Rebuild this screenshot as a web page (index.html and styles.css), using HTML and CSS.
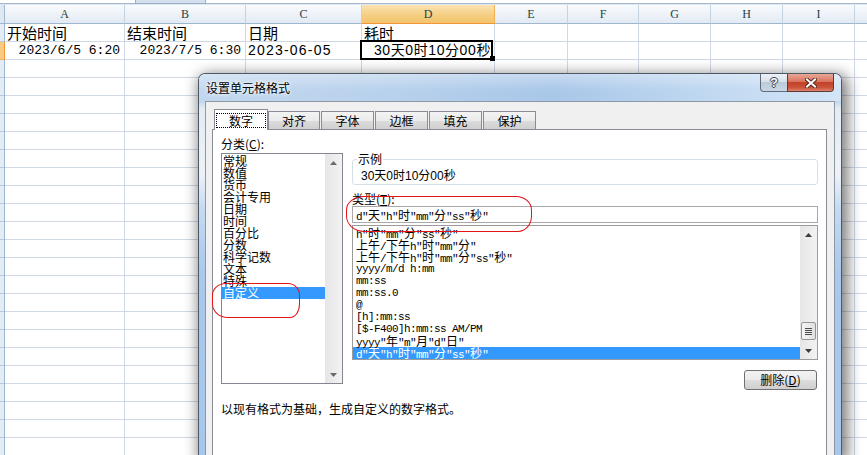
FILE: index.html
```html
<!DOCTYPE html>
<html lang="zh">
<head>
<meta charset="utf-8">
<title>设置单元格格式</title>
<link rel="stylesheet" href="styles.css">
</head>
<body>
<div class="topbar"><span class="topbar-tab"></span></div>
<div class="sheet">
  <div class="rh corner"></div>
  <div class="ch">A</div><div class="ch">B</div><div class="ch">C</div><div class="ch on">D</div><div class="ch">E</div><div class="ch">F</div><div class="ch">G</div><div class="ch">H</div><div class="ch">I</div><div class="ch last"></div>

  <div class="rh"></div>
  <div class="c">开始时间</div><div class="c">结束时间</div><div class="c">日期</div><div class="c">耗时</div><div class="c"></div><div class="c"></div><div class="c"></div><div class="c"></div><div class="c"></div><div class="c last"></div>

  <div class="rh on"></div>
  <div class="c num cmono">2023/6/5 6:20</div><div class="c num cmono">2023/7/5 6:30</div><div class="c sans">2023-06-05</div><div class="c num sans cur">30天0时10分00秒</div><div class="c"></div><div class="c"></div><div class="c"></div><div class="c"></div><div class="c"></div><div class="c last"></div>

  <div class="rh fill"></div>
  <div class="f"></div><div class="f"></div><div class="f"></div><div class="f"></div><div class="f"></div><div class="f"></div><div class="f"></div><div class="f"></div><div class="f"></div><div class="f last"></div>
</div>

<div class="dialog">
  <div class="titlebar">
    <span class="title">设置单元格格式</span>
    <div class="tbtns">
      <span class="btn-help">?</span>
      <span class="btn-close"><svg width="12" height="10" viewBox="0 0 12 10"><path d="M2 1.5 L10 8.5 M10 1.5 L2 8.5" stroke="#5a2a22" stroke-width="4" stroke-linecap="square"/><path d="M2 1.5 L10 8.5 M10 1.5 L2 8.5" stroke="#ffffff" stroke-width="2" stroke-linecap="square"/></svg></span>
    </div>
  </div>
  <div class="dbody">
    <div class="tabs">
      <span class="tab active"><span class="focus">数字</span></span>
      <span class="tab second">对齐</span>
      <span class="tab">字体</span>
      <span class="tab">边框</span>
      <span class="tab">填充</span>
      <span class="tab">保护</span>
    </div>
    <div class="panel">
      <div class="col-left">
        <div class="lbl">分类(<u>C</u>):</div>
        <div class="catlist">
          <ul class="items">
            <li>常规</li>
            <li>数值</li>
            <li>货币</li>
            <li>会计专用</li>
            <li>日期</li>
            <li>时间</li>
            <li>百分比</li>
            <li>分数</li>
            <li>科学记数</li>
            <li>文本</li>
            <li>特殊</li>
            <li class="sel">自定义</li>
          </ul>
          <div class="vscroll">
            <span class="sbtn"><svg width="7" height="4" viewBox="0 0 7 4"><path d="M3.5 0 L7 4 H0 Z" fill="#6a6a6a"/></svg></span>
            <span class="sspace"></span>
            <span class="sbtn"><svg width="7" height="4" viewBox="0 0 7 4"><path d="M0 0 H7 L3.5 4 Z" fill="#6a6a6a"/></svg></span>
          </div>
        </div>
      </div>
      <div class="col-right">
        <fieldset class="sample">
          <legend>示例</legend>
          <div class="sample-val">30天0时10分00秒</div>
        </fieldset>
        <div class="lbl lbl-type">类型(<u>T</u>):</div>
        <div class="typeinput fmt">d"<span class="zh">天</span>"h"<span class="zh">时</span>"mm"<span class="zh">分</span>"ss"<span class="zh">秒</span>"</div>
        <div class="typelist">
          <ul class="items fmt">
            <li>h"<span class="zh">时</span>"mm"<span class="zh">分</span>"ss"<span class="zh">秒</span>"</li>
            <li><span class="zh">上午</span>/<span class="zh">下午</span>h"<span class="zh">时</span>"mm"<span class="zh">分</span>"</li>
            <li><span class="zh">上午</span>/<span class="zh">下午</span>h"<span class="zh">时</span>"mm"<span class="zh">分</span>"ss"<span class="zh">秒</span>"</li>
            <li>yyyy/m/d h:mm</li>
            <li>mm:ss</li>
            <li>mm:ss.0</li>
            <li>@</li>
            <li>[h]:mm:ss</li>
            <li>[$-F400]h:mm:ss AM/PM</li>
            <li>yyyy"<span class="zh">年</span>"m"<span class="zh">月</span>"d"<span class="zh">日</span>"</li>
            <li class="sel">d"<span class="zh">天</span>"h"<span class="zh">时</span>"mm"<span class="zh">分</span>"ss"<span class="zh">秒</span>"</li>
          </ul>
          <div class="vscroll">
            <span class="sbtn"><svg width="7" height="4" viewBox="0 0 7 4"><path d="M3.5 0 L7 4 H0 Z" fill="#3c3c3c"/></svg></span>
            <span class="sspace"></span>
            <span class="thumb"><span class="grip"></span></span>
            <span class="sbtn"><svg width="7" height="4" viewBox="0 0 7 4"><path d="M0 0 H7 L3.5 4 Z" fill="#3c3c3c"/></svg></span>
          </div>
        </div>
        <span class="button">删除(<u>D</u>)</span>
      </div>
      <div class="desc">以现有格式为基础，生成自定义的数字格式。</div>
    </div>
  </div>
</div>

<div class="mark mark1"></div>
<div class="mark mark2"></div>
</body>
</html>
```
FILE: styles.css
```css
* { box-sizing: border-box; }
html, body { margin: 0; padding: 0; }
body {
  width: 867px;
  height: 455px;
  overflow: hidden;
  position: relative;
  background: #fff;
  font-family: "Noto Sans CJK SC", sans-serif;
  color: #000;
}

/* ---------- spreadsheet ---------- */
.topbar {
  height: 5px;
  display: flex;
  background: linear-gradient(to bottom, #fff 0, #fff 3px, #a4b7cd 3px, #a4b7cd 4px, #dfe7f1 4px);
}
.topbar-tab {
  margin-left: 135px;
  width: 71px;
  height: 4px;
  background: #d4e0ee;
  border: 1px solid #9ab0ca;
  border-top: 0;
}
.sheet {
  display: grid;
  grid-template-columns: 5px 120px 121px 116px 133px 73px 71px 72px 72px 72px 1fr;
  grid-template-rows: 19px 18px 18px 1fr;
  height: 450px;
}
.ch {
  background: linear-gradient(#f9fbfd, #e3eaf4);
  border-right: 1px solid #c5d2e2;
  border-bottom: 1px solid #9eb6ce;
  font: 12px/18px "Liberation Serif", serif;
  color: #27413e;
  text-align: center;
}
.ch.on {
  background: linear-gradient(#fae3b4, #f5cd80 60%, #f3c46c);
  border-right-color: #f1b256;
  border-bottom-color: #f29536;
}
.rh {
  background: #e4ecf7;
  border-right: 1px solid #9eb6ce;
  border-bottom: 1px solid #b9c9dc;
}
.rh.corner { background: #dfe7f2; border-bottom-color: #9eb6ce; }
.rh.on { background: #f8cb84; border-right-color: #f29536; border-bottom-color: #f0b260; }
.rh.fill {
  border-bottom: 0;
  background: repeating-linear-gradient(to bottom, #e4ecf7 0, #e4ecf7 17px, #b9c9dc 17px, #b9c9dc 18px);
}
.c {
  border-right: 1px solid #d0d7e5;
  border-bottom: 1px solid #d0d7e5;
  font-size: 15px;
  line-height: 17px;
  padding: 0 2px;
  white-space: nowrap;
}
.c.num { text-align: right; padding-right: 4px; }
.c.cmono { font-family: "Liberation Mono", monospace; font-size: 13px; }
.c.sans {
  font-family: "Liberation Sans", "Noto Sans CJK SC", sans-serif;
  font-size: 14px;
  letter-spacing: 1.2px;
}
.c.cur { position: relative; padding-right: 3px; letter-spacing: 0.6px; }
.c.cur::after {
  content: "";
  position: absolute;
  left: -2px; top: -2px; right: 1px; bottom: -1px;
  border: 2px solid #000;
}
.c.cur::before {
  content: "";
  position: absolute;
  right: -1px; bottom: -2px;
  width: 5px; height: 5px;
  background: #000;
  z-index: 1;
}
.f {
  border-right: 1px solid #d0d7e5;
  background: repeating-linear-gradient(to bottom, transparent 0, transparent 17px, #d0d7e5 17px, #d0d7e5 18px);
}
.last { border-right: 0; }

/* ---------- dialog ---------- */
.dialog {
  position: absolute;
  left: 198px;
  top: 73px;
  width: 644px;
  height: 382px;
  border: 1px solid #4d5966;
  border-bottom: 0;
  border-radius: 7px 7px 0 0;
  background: linear-gradient(to bottom, #c4d9ef 0, #bdd5ee 27px, #e4ebf3 34px, #eef2f7 100px, #c4daf1 135px, #a9c8ec 200px, #a6c6eb 382px);
  box-shadow: 3px 4px 14px 3px rgba(0, 0, 0, .5);
  display: flex;
  flex-direction: column;
  font-size: 12px;
}
.titlebar {
  height: 27px;
  display: flex;
  align-items: flex-start;
  border-radius: 6px 6px 0 0;
  background:
    linear-gradient(to bottom, rgba(255,255,255,.35), rgba(255,255,255,0) 60%),
    linear-gradient(to right, #c3d8ef 0%, #b8d1ec 30%, #a9c7e9 55%, #bcd5ef 75%, #d3e5f7 100%);
}
.title {
  padding-left: 7px;
  line-height: 27px;
  font-size: 12px;
  text-shadow: 0 0 5px #fff, 0 0 3px #fff;
}
.tbtns { margin-left: auto; margin-right: 7px; display: flex; }
.btn-help {
  width: 27px;
  height: 18px;
  border: 1px solid #5f6d7c;
  border-top: 0;
  border-right: 0;
  border-radius: 0 0 0 4px;
  background: linear-gradient(#eef2f7, #d7e0ea 45%, #bccbdb 50%, #c9d6e4);
  font: bold 13px/17px "Liberation Sans", sans-serif;
  color: #f5f7fa;
  text-align: center;
  text-shadow: 1px 0 #3a4656, -1px 0 #3a4656, 0 1px #3a4656, 0 -1px #3a4656;
}
.btn-close {
  width: 47px;
  height: 18px;
  border: 1px solid #5e3a33;
  border-top: 0;
  border-radius: 0 0 4px 0;
  background: linear-gradient(#e9a897, #d9735e 45%, #c2422a 50%, #cc533c 80%, #de846e);
  display: flex;
  align-items: center;
  justify-content: center;
}
.dbody {
  flex: 1;
  min-height: 0;
  margin: 0 6px;
  border: 1px solid #8d98a4;
  border-bottom: 0;
  background: #f0f0f0;
  display: flex;
  flex-direction: column;
  padding: 7px 7px 0 6px;
}
.tabs {
  display: flex;
  align-items: flex-end;
  height: 20px;
  flex: none;
  margin-left: 2px;
  position: relative;
  z-index: 1;
}
.tab {
  width: 53px;
  height: 18px;
  margin-left: 1px;
  border: 1px solid #898c95;
  border-bottom: 0;
  background: linear-gradient(#f3f3f3, #ebebeb 50%, #dddddd 50%, #cfcfcf);
  line-height: 17px;
  text-align: center;
}
.tab.second { width: 52px; margin-left: 0; }
.tab.active {
  width: 54px;
  height: 21px;
  margin-left: 0;
  margin-bottom: -1px;
  background: #fff;
  padding: 3px 1px 0 1px;
}
.focus {
  display: block;
  height: 15px;
  border: 1px dotted #000;
  line-height: 13px;
}
.panel {
  flex: 1;
  min-height: 0;
  overflow: hidden;
  background: #fff;
  border: 1px solid #898c95;
  border-bottom: 0;
  display: grid;
  grid-template-columns: 122px 466px;
  column-gap: 9px;
  align-content: start;
  padding: 6px 0 0 8px;
}
.lbl { line-height: 12px; margin-top: 2px; white-space: nowrap; }
.col-left { display: flex; flex-direction: column; }
.col-right { display: flex; flex-direction: column; }

.catlist {
  margin-top: 3px;
  height: 231px;
  border: 1px solid #828790;
  display: flex;
}
.items {
  list-style: none;
  margin: 0;
  padding: 1px 0 0 0;
  flex: 1;
  overflow: hidden;
}
.items li {
  display: block;
  height: 12px;
  line-height: 12px;
  white-space: nowrap;
  padding-left: 1px;
}
.items li.sel { background: #3399ff; color: #fff; }
.vscroll {
  width: 17px;
  display: flex;
  flex-direction: column;
  background: linear-gradient(to right, #e6e6e6, #f2f2f2);
}
.sbtn {
  height: 17px;
  display: flex;
  align-items: center;
  justify-content: center;
}
.sspace { flex: 1; }
.thumb {
  height: 18px;
  margin: 0 1px 2px 1px;
  border: 1px solid #959595;
  border-radius: 2px;
  background: linear-gradient(to right, #f4f4f4, #e1e1e1);
  display: flex;
  align-items: center;
  justify-content: center;
}
.grip {
  width: 7px;
  height: 7px;
  background: repeating-linear-gradient(to bottom, #4d4d4d 0, #4d4d4d 1px, #e8e8e8 1px, #e8e8e8 2px);
}

.sample {
  margin: 17px 0 0 0;
  padding: 5px 8px 2px 8px;
  border: 1px solid #d5dfe5;
  border-radius: 3px;
  min-width: 0;
}
.sample legend {
  padding: 0 1px;
  margin-left: -4px;
  line-height: 12px;
}
.sample-val {
  line-height: 12px;
  font-family: "Liberation Sans", "Noto Sans CJK SC", sans-serif;
  font-size: 12px;
}
.lbl-type { margin-top: 8px; }
.fmt {
  font-family: "Liberation Mono", monospace;
  font-size: 11px;
  letter-spacing: -0.6px;
}
.zh {
  font-family: "Noto Sans CJK SC", sans-serif;
  font-size: 12px;
  letter-spacing: 0;
}
.typeinput {
  margin-top: 1px;
  height: 17px;
  border: 1px solid #a9a9a9;
  padding-left: 3px;
  line-height: 15px;
  white-space: nowrap;
}
.typelist {
  margin-top: 2px;
  height: 135px;
  border: 1px solid #9b9b9b;
  display: flex;
}
.typelist .items li { padding-left: 3px; }
.button {
  margin-top: 10px;
  margin-right: 1px;
  align-self: flex-end;
  width: 73px;
  height: 20px;
  border: 1px solid #707070;
  border-radius: 3px;
  background: linear-gradient(#f2f2f2, #ebebeb 50%, #dddddd 50%, #cfcfcf);
  text-align: center;
  line-height: 18px;
}
.desc {
  grid-column: 1 / -1;
  margin-top: 13px;
  line-height: 12px;
}

/* ---------- red annotations ---------- */
.mark {
  position: absolute;
  border: 1.3px solid #e3151a;
}
.mark1 {
  left: 212px;
  top: 283px;
  width: 88px;
  height: 35px;
  border-radius: 14px 12px 10px 16px / 12px 12px 14px 14px;
}
.mark2 {
  left: 346px;
  top: 196px;
  width: 186px;
  height: 36px;
  border-radius: 18px 16px 14px 18px / 14px 14px 16px 16px;
}
```
